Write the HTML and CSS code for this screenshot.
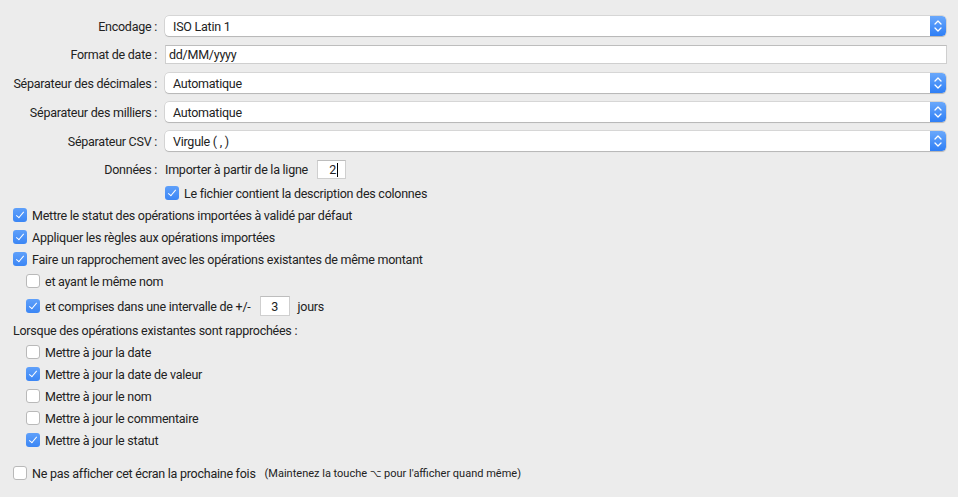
FILE: index.html
```html
<!DOCTYPE html>
<html lang="fr">
<head>
<meta charset="utf-8">
<link rel="stylesheet" href="styles.css">
</head>
<body>
<div class="panel">
  <div class="grid">
    <div class="label">Encodage :</div>
    <div class="popup"><span class="popup-text">ISO Latin 1</span><span class="stepper"><svg width="16" height="20" viewBox="0 0 16 20"><path d="M5 8 L8 5 L11 8 M5 12 L8 15 L11 12" fill="none" stroke="#fff" stroke-width="1.3" stroke-linecap="round" stroke-linejoin="round"/></svg></span></div>

    <div class="label">Format de date :</div>
    <div class="textfield wide">dd/MM/yyyy</div>

    <div class="label">Séparateur des décimales :</div>
    <div class="popup"><span class="popup-text">Automatique</span><span class="stepper"><svg width="16" height="20" viewBox="0 0 16 20"><path d="M5 8 L8 5 L11 8 M5 12 L8 15 L11 12" fill="none" stroke="#fff" stroke-width="1.3" stroke-linecap="round" stroke-linejoin="round"/></svg></span></div>

    <div class="label">Séparateur des milliers :</div>
    <div class="popup"><span class="popup-text">Automatique</span><span class="stepper"><svg width="16" height="20" viewBox="0 0 16 20"><path d="M5 8 L8 5 L11 8 M5 12 L8 15 L11 12" fill="none" stroke="#fff" stroke-width="1.3" stroke-linecap="round" stroke-linejoin="round"/></svg></span></div>

    <div class="label">Séparateur CSV :</div>
    <div class="popup"><span class="popup-text">Virgule ( , )</span><span class="stepper"><svg width="16" height="20" viewBox="0 0 16 20"><path d="M5 8 L8 5 L11 8 M5 12 L8 15 L11 12" fill="none" stroke="#fff" stroke-width="1.3" stroke-linecap="round" stroke-linejoin="round"/></svg></span></div>

    <div class="label">Données :</div>
    <div class="inline">
      <span>Importer à partir de la ligne</span>
      <span class="textfield small line-field">2<span class="caret"></span></span>
    </div>
  </div>

  <div class="checks">
    <div class="row col2"><span class="cb on"></span><span>Le fichier contient la description des colonnes</span></div>
    <div class="row"><span class="cb on"></span><span>Mettre le statut des opérations importées à validé par défaut</span></div>
    <div class="row"><span class="cb on"></span><span>Appliquer les règles aux opérations importées</span></div>
    <div class="row"><span class="cb on"></span><span>Faire un rapprochement avec les opérations existantes de même montant</span></div>
    <div class="row sub"><span class="cb"></span><span>et ayant le même nom</span></div>
    <div class="row sub tall"><span class="cb on"></span><span>et comprises dans une intervalle de +/-</span><span class="textfield small days">3</span><span class="unit">jours</span></div>
    <div class="row heading">Lorsque des opérations existantes sont rapprochées :</div>
    <div class="row sub"><span class="cb"></span><span>Mettre à jour la date</span></div>
    <div class="row sub"><span class="cb on"></span><span>Mettre à jour la date de valeur</span></div>
    <div class="row sub"><span class="cb"></span><span>Mettre à jour le nom</span></div>
    <div class="row sub"><span class="cb"></span><span>Mettre à jour le commentaire</span></div>
    <div class="row sub"><span class="cb on"></span><span>Mettre à jour le statut</span></div>
    <div class="row footer"><span class="cb"></span><span>Ne pas afficher cet écran la prochaine fois</span><span class="hint">(Maintenez la touche <span class="opt">⌥</span> pour l'afficher quand même)</span></div>
  </div>
</div>
</body>
</html>
```

FILE: styles.css
```css
html, body {
  margin: 0;
  padding: 0;
  background: #ececec;
}
body {
  font-family: Roboto, "Liberation Sans", Arial, sans-serif;
  font-size: 12.5px;
  letter-spacing: -0.25px;
  color: #222;
  width: 958px;
  height: 497px;
  overflow: hidden;
}
.panel {
  padding: 16px 12px 0 0;
}
.grid {
  display: grid;
  grid-template-columns: 157px 1fr;
  column-gap: 8px;
  row-gap: 9px;
  align-items: center;
}
.label {
  text-align: right;
  white-space: nowrap;
}
.popup {
  height: 20px;
  box-sizing: border-box;
  background: #fff;
  border-radius: 4px;
  box-shadow: 0 0 0 0.5px rgba(0,0,0,0.18), 0 1px 1px rgba(0,0,0,0.15);
  display: flex;
  align-items: center;
  overflow: hidden;
}
.popup-text {
  flex: 1;
  padding-left: 8px;
}
.stepper {
  width: 16px;
  height: 20px;
  background: linear-gradient(#6aa8fb, #2f7ff6);
  display: flex;
  border-radius: 0 4px 4px 0;
}
.textfield {
  height: 19px;
  box-sizing: border-box;
  background: #fff;
  border: 1px solid #cfcfcf;
  border-top-color: #bdbdbd;
  display: flex;
  align-items: center;
  padding-left: 3px;
}
.wide {
  margin-right: -1px;
}
.inline {
  display: flex;
  align-items: center;
  gap: 9px;
  height: 19px;
}
.small {
  width: 29px;
  justify-content: center;
  padding-left: 0;
}
.line-field {
  justify-content: flex-end;
  padding-right: 7px;
}
.caret {
  display: inline-block;
  width: 1px;
  height: 14px;
  background: #000;
  margin-left: 1px;
}
.checks {
  display: flex;
  flex-direction: column;
  margin-top: 3px;
}
.row {
  display: flex;
  align-items: center;
  height: 22px;
  padding-left: 13px;
  white-space: nowrap;
}
.row.col2 {
  padding-left: 165px;
}
.row.sub {
  padding-left: 26px;
}
.row.tall {
  height: 28px;
}
.row.heading {
  height: 21px;
  padding-left: 13px;
}
.row.footer {
  margin-top: 11px;
}
.cb {
  width: 14px;
  height: 14px;
  box-sizing: border-box;
  border-radius: 3px;
  background: #fff;
  border: 1px solid #b9b9b9;
  margin-right: 5px;
  flex: none;
  position: relative;
}
.cb.on {
  border: none;
  background: linear-gradient(#5fa0fa, #3b86f5);
}
.cb.on::after {
  content: "";
  position: absolute;
  left: 5px;
  top: 2px;
  width: 3px;
  height: 7px;
  border: solid #fff;
  border-width: 0 1.5px 1.5px 0;
  transform: rotate(40deg);
}
.days {
  margin-left: 9px;
  width: 30px;
  height: 20px;
}
.unit {
  margin-left: 8px;
}
.hint {
  font-size: 11px;
  letter-spacing: 0;
  margin-left: 9px;
}
.opt {
  font-family: "DejaVu Sans", sans-serif;
  font-size: 10px;
}
```
